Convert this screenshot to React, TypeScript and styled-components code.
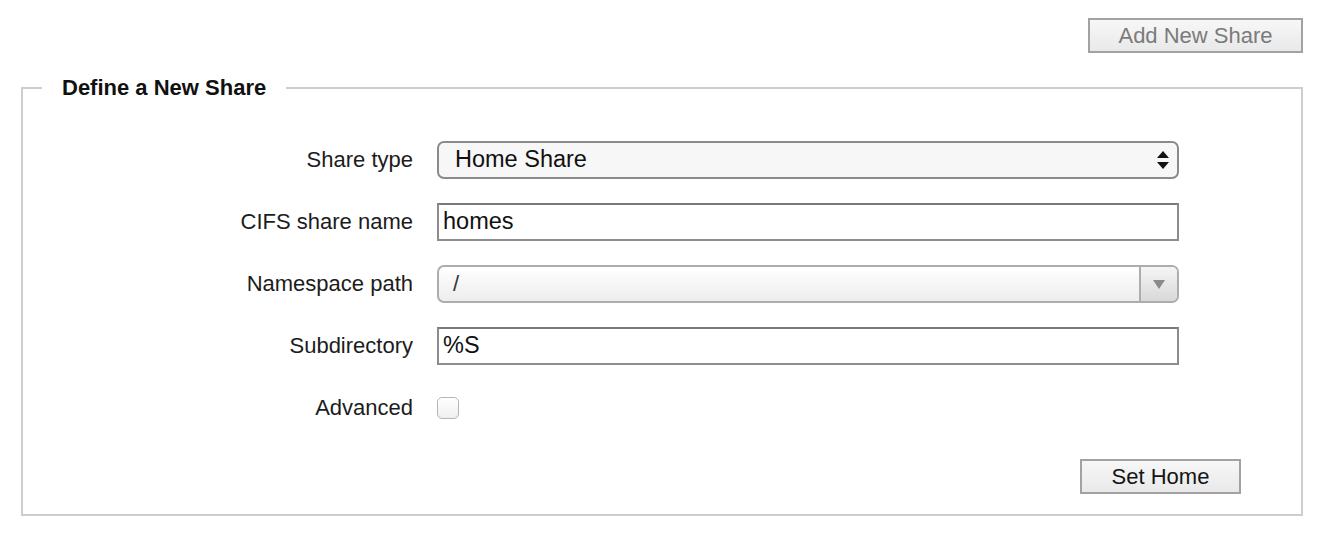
import React from "react";
import styled, { createGlobalStyle } from "styled-components";

const Global = createGlobalStyle`
  html, body { margin: 0; padding: 0; background: #ffffff; }
  body { font-family: "Liberation Sans", Arial, Helvetica, sans-serif; color: #1a1a1a; }
`;

const FONT = `"Liberation Sans", Arial, Helvetica, sans-serif`;

const Page = styled.div`
  width: 1282px;
  padding: 18px 29px 0 21px;
  display: flex;
  flex-direction: column;
  align-items: flex-end;
`;

const Button = styled.button<{ $w: number; $h: number; $muted?: boolean }>`
  box-sizing: border-box;
  width: ${(p) => p.$w}px;
  height: ${(p) => p.$h}px;
  border: 2px solid #a2a2a2;
  border-radius: 0;
  background: linear-gradient(#f7f7f7, #e9e9e9);
  font: 22px/1 ${FONT};
  color: ${(p) => (p.$muted ? "#7b7b7b" : "#151515")};
  padding: 0;
  margin: 0;
`;

const Fieldset = styled.fieldset`
  box-sizing: border-box;
  width: 1282px;
  min-width: 0;
  margin: 22px 0 0;
  border: 2px solid #cdcdcd;
  padding: 0 0 20px;
`;

const Legend = styled.legend`
  margin-left: 19px;
  padding: 0 20px;
  font: bold 22px/25px ${FONT};
  color: #111;
`;

const Form = styled.div`
  display: grid;
  grid-template-columns: 390px 742px;
  grid-auto-rows: 38px;
  column-gap: 24px;
  row-gap: 24px;
  margin-top: 41px;
  align-items: center;
`;

const Label = styled.div`
  text-align: right;
  font: 22px/1 ${FONT};
  color: #1c1c1c;
`;

const Select = styled.div`
  box-sizing: border-box;
  height: 38px;
  border: 2px solid #8b8b8b;
  border-radius: 7px;
  background: #f7f7f7;
  display: flex;
  align-items: center;
  justify-content: space-between;
  padding: 0 8px 0 16px;
  font: 23.5px/1 ${FONT};
  color: #111;
`;

const TextInput = styled.div`
  box-sizing: border-box;
  height: 38px;
  border: 2px solid #8d8d8d;
  border-top-color: #7a7a7a;
  background: #fff;
  display: flex;
  align-items: center;
  padding: 0 4px;
  font: 23.5px/1 ${FONT};
  color: #111;
`;

const Combo = styled.div`
  box-sizing: border-box;
  height: 38px;
  border: 2px solid #adadad;
  border-radius: 7px;
  background: linear-gradient(#ffffff, #ededed);
  display: flex;
  align-items: stretch;
  overflow: hidden;
`;

const ComboValue = styled.div`
  flex: 1;
  display: flex;
  align-items: center;
  padding-left: 14px;
  font: 22px/1 ${FONT};
  color: #333;
`;

const ComboButton = styled.div`
  width: 36px;
  border-left: 2px solid #adadad;
  background: linear-gradient(#f5f5f5, #d9d9d9);
  display: flex;
  align-items: center;
  justify-content: center;
`;

const CheckCell = styled.div`
  display: flex;
  align-items: center;
`;

const Checkbox = styled.div`
  box-sizing: border-box;
  width: 22px;
  height: 22px;
  border: 1px solid #b4b4b4;
  border-radius: 5px;
  background: linear-gradient(#ffffff, #efefef);
`;

const Actions = styled.div`
  display: flex;
  justify-content: flex-end;
  padding-right: 60px;
  margin-top: 32px;
`;

const UpDown = () => (
  <svg width="12" height="18" viewBox="0 0 12 18" aria-hidden>
    <path d="M0 7 L6 0 L12 7 Z" fill="#111" />
    <path d="M0 11 L12 11 L6 18 Z" fill="#111" />
  </svg>
);

const Down = () => (
  <svg width="12" height="9" viewBox="0 0 12 9" aria-hidden>
    <path d="M0 0 L12 0 L6 9 Z" fill="#8a8a8a" />
  </svg>
);

export default function App() {
  return (
    <>
      <Global />
      <Page>
        <Button $w={215} $h={35} $muted>
          Add New Share
        </Button>
        <Fieldset>
          <Legend>Define a New Share</Legend>
          <Form>
            <Label>Share type</Label>
            <Select>
              <span>Home Share</span>
              <UpDown />
            </Select>

            <Label>CIFS share name</Label>
            <TextInput>homes</TextInput>

            <Label>Namespace path</Label>
            <Combo>
              <ComboValue>/</ComboValue>
              <ComboButton>
                <Down />
              </ComboButton>
            </Combo>

            <Label>Subdirectory</Label>
            <TextInput>%S</TextInput>

            <Label>Advanced</Label>
            <CheckCell>
              <Checkbox />
            </CheckCell>
          </Form>
          <Actions>
            <Button $w={161} $h={35}>
              Set Home
            </Button>
          </Actions>
        </Fieldset>
      </Page>
    </>
  );
}
